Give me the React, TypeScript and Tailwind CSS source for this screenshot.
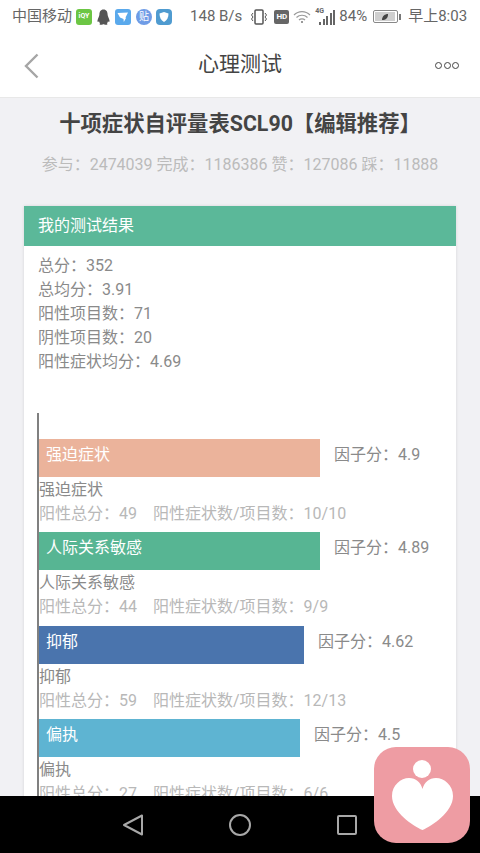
function StatusBar() {
  return (
    <div className="h-[33px] shrink-0 bg-white flex items-center pl-[12px] text-[15px] text-[#666666]">
      <span>中国移动</span>
      <span className="ml-[4px] w-[16px] h-[16px] rounded-[3px] bg-[#6cc644] text-white text-[7px] font-bold flex items-center justify-center">iQY</span>
      <svg className="ml-[5px]" width="13" height="16" viewBox="0 0 13 16">
        <path d="M6.500 0.500C3.500 0.500 2.400 3 2.400 5.500C2.400 7 1 9 .5 11.500C.3 13 1 13.300 2 12.300C2.500 14 3 14.500 3 14.500C2 15 2.500 15.800 4 15.800C5.500 15.800 6 15.300 6.500 15.300C7 15.300 7.500 15.800 9 15.800C10.500 15.800 11 15 10 14.500C10 14.500 10.500 14 11 12.300C12 13.300 12.700 13 12.500 11.500C12 9 10.600 7 10.600 5.500C10.600 3 9.500 .5 6.500 .5Z" fill="#555555" />
      </svg>
      <svg className="ml-[5px]" width="16" height="16" viewBox="0 0 16 16">
        <rect width="16" height="16" rx="3" fill="#5aa9ec" />
        <path d="M2.500 4L13 3.500L10.500 8.500L11 9L8.800 13L8.500 10L5 8.500Z" fill="#ffffff" />
      </svg>
      <span className="ml-[5px] w-[16px] h-[16px] rounded-full bg-[#6f9ce6] text-white text-[10px] flex items-center justify-center">贴</span>
      <svg className="ml-[4px]" width="16" height="16" viewBox="0 0 16 16">
        <rect width="16" height="16" rx="4" fill="#4f9bd0" />
        <path d="M8 3L12.500 4.500C12.500 8.500 11 11.500 8 13C5 11.500 3.500 8.500 3.500 4.500Z" fill="#ffffff" />
      </svg>
      <span className="ml-[18px]">148 B/s</span>
      <svg className="ml-[8px]" width="18" height="16" viewBox="0 0 18 16" fill="none" stroke="#555555">
        <rect x="5" y="1" width="8" height="14" rx="1" strokeWidth="1.500" />
        <path d="M3 4L1.500 6L3 8L1.500 10L3 12M15 4L16.500 6L15 8L16.500 10L15 12" strokeWidth="1" />
      </svg>
      <span className="ml-[6px] w-[15px] h-[14px] rounded-[2px] bg-[#666666] text-white text-[8px] font-bold flex items-center justify-center">HD</span>
      <svg className="ml-[4px]" width="18" height="14" viewBox="0 0 18 14" fill="none" stroke="#9a9a9a" strokeWidth="1.200">
        <path d="M1 5C5.500 .5 12.500 .5 17 5M3.500 7.500C6.500 4.500 11.500 4.500 14.500 7.500M6 10C7.500 8.500 10.500 8.500 12 10" />
        <circle cx="9" cy="12" r="1" fill="#777777" stroke="none" />
      </svg>
      <div className="ml-[4px] relative w-[23px] h-[16px] flex items-end gap-[1.500px] pl-[4px]">
        <span className="absolute left-0 top-[-2px] text-[7px] font-bold leading-[8px]">4G</span>
        <span className="w-[2px] h-[3px] bg-[#666666]" />
        <span className="w-[2px] h-[6px] bg-[#666666]" />
        <span className="w-[2px] h-[9px] bg-[#666666]" />
        <span className="w-[2px] h-[12px] bg-[#666666]" />
        <span className="w-[2px] h-[15px] bg-[#666666]" />
      </div>
      <span className="ml-[1px]">84%</span>
      <div className="ml-[6px] w-[25px] h-[13px] border border-[#888888] rounded-[2px] p-[1px]">
        <div className="w-[20px] h-full bg-[#cfcfcf] flex items-center justify-center">
          <svg width="8" height="8" viewBox="0 0 8 8"><path d="M1 7C1 3 4 1 7 1C7 5 5 7 1 7Z" fill="#444444" /></svg>
        </div>
      </div>
      <span className="ml-[1px] w-[2px] h-[6px] bg-[#777777]" />
      <span className="ml-[7px]">早上8:03</span>
    </div>
  )
}

function NavBar() {
  return (
    <div className="h-[65px] shrink-0 bg-white border-b border-[#e8e8e8] relative flex items-center justify-center text-[21px] text-[#444444]">
      <svg className="absolute left-[24px] top-[20px]" width="16" height="26" viewBox="0 0 16 26" fill="none" stroke="#a6a6a6" strokeWidth="2.400">
        <path d="M13.500 1.500L2 13L13.500 24.500" />
      </svg>
      <span>心理测试</span>
      <div className="absolute left-[435px] top-[29px] flex gap-[1.500px]">
        <span className="w-[7px] h-[7px] rounded-full border-[1.500px] border-[#444444]" />
        <span className="w-[7px] h-[7px] rounded-full border-[1.500px] border-[#444444]" />
        <span className="w-[7px] h-[7px] rounded-full border-[1.500px] border-[#444444]" />
      </div>
    </div>
  )
}

function BarRow({ name, barClass, widthClass, score, total, ratio }: { name: string; barClass: string; widthClass: string; score: string; total: string; ratio: string }) {
  return (
    <div className="mb-[6.330px]">
      <div className="flex items-start">
        <div className={`h-[38px] ${widthClass} ${barClass} text-white pl-[7px] leading-[32px]`}>{name}</div>
        <div className="ml-[14px] leading-[32px] text-[#8a8a8a]">因子分：{score}</div>
      </div>
      <div className="pt-[1px] leading-[24px] text-[#8a8a8a]">{name}</div>
      <div className="leading-[24px] text-[#b8b8b8]">
        阳性总分：{total}<span className="ml-[16px]">阳性症状数/项目数：{ratio}</span>
      </div>
    </div>
  )
}

export default function App() {
  return (
    <div className="w-[480px] h-[853px] overflow-hidden relative flex flex-col bg-[#f1f1f4] text-[16px]" style={{ fontFamily: 'Roboto, "Noto Sans CJK SC", sans-serif' }}>
      <StatusBar />
      <NavBar />
      <div className="flex-1 min-h-0 overflow-hidden">
        <h1 className="text-center text-[21.330px] font-bold text-[#444444] leading-[28px] mt-[12px]">十项症状自评量表SCL90【编辑推荐】</h1>
        <p className="text-center text-[#bbbbbb] leading-[24px] mt-[15px]">参与：2474039 完成：1186386 赞：127086 踩：11888</p>
        <div className="mx-[24px] mt-[29px] bg-white shadow-[0_0_3px_rgba(0,0,0,0.12)]">
          <div className="h-[40px] bg-[#5bb899] text-white pl-[14px] leading-[40px]">我的测试结果</div>
          <div className="pl-[14px] pt-[8px] text-[#8a8a8a] leading-[24px]">
            <div>总分：352</div>
            <div>总均分：3.91</div>
            <div>阳性项目数：71</div>
            <div>阴性项目数：20</div>
            <div>阳性症状均分：4.69</div>
          </div>
          <div className="ml-[13px] mt-[39px] border-l-2 border-[#808080] pt-[26px]">
            <BarRow name="强迫症状" barClass="bg-[#ebb39b]" widthClass="w-[281px]" score="4.9" total="49" ratio="10/10" />
            <BarRow name="人际关系敏感" barClass="bg-[#57b593]" widthClass="w-[281px]" score="4.89" total="44" ratio="9/9" />
            <BarRow name="抑郁" barClass="bg-[#4a74ad]" widthClass="w-[265px]" score="4.62" total="59" ratio="12/13" />
            <BarRow name="偏执" barClass="bg-[#5eb4d2]" widthClass="w-[261px]" score="4.5" total="27" ratio="6/6" />
          </div>
        </div>
      </div>
      <div className="h-[57px] shrink-0 bg-black relative z-10 flex items-center pl-[121px]">
        <svg width="22" height="24" viewBox="0 0 22 24" fill="none" stroke="#a8a8a8" strokeWidth="2">
          <path d="M21 2.500V21.500L3 12Z" strokeLinejoin="round" />
        </svg>
        <svg className="ml-[86px]" width="22" height="22" viewBox="0 0 22 22" fill="none" stroke="#a8a8a8" strokeWidth="2">
          <circle cx="11" cy="11" r="10" />
        </svg>
        <div className="ml-[86px] w-[20px] h-[20px] border-2 border-[#a8a8a8] rounded-[2px]" />
      </div>
      <div className="absolute z-20 left-[374px] top-[747px] w-[96px] h-[96px] rounded-[22px] bg-[#ee9ca3]">
        <svg className="ml-[18px] mt-[13px]" width="61" height="71" viewBox="0 0 61 71">
          <circle cx="30" cy="9" r="9" fill="#ffffff" />
          <path d="M30.500 70C21 66 0 52 0 36C0 25 9 18 17 18C24 18 28.500 22 30.500 29C32.500 22 37 18 44 18C52 18 61 25 61 36C61 52 40 66 30.500 70Z" fill="#ffffff" />
        </svg>
      </div>
    </div>
  )
}
